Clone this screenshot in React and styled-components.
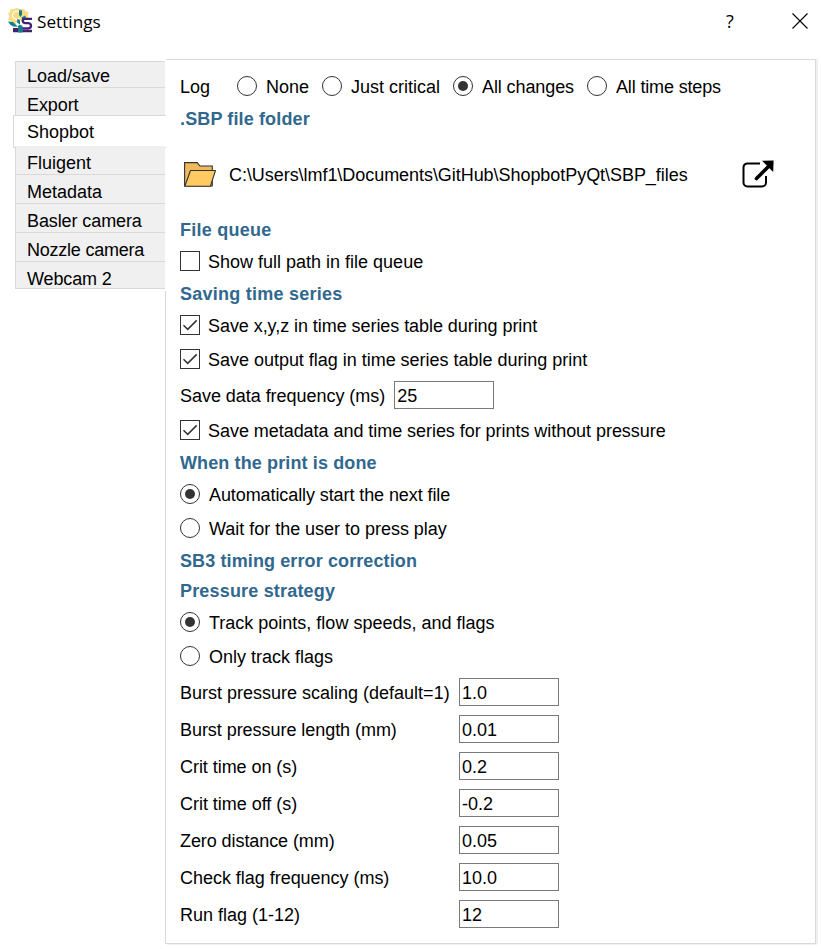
import React, { useState } from "react";
import styled, { createGlobalStyle, css } from "styled-components";

const GlobalStyle = createGlobalStyle`
  * { box-sizing: border-box; }
  body { margin: 0; background: #fff; }
`;

const Window = styled.div`
  width: 821px;
  height: 949px;
  display: flex;
  flex-direction: column;
  background: #fff;
  color: #000;
  font-family: "Liberation Sans", Arial, sans-serif;
  font-size: 18px;
  line-height: 22px;
  white-space: nowrap;
  overflow: hidden;
`;

const TitleBar = styled.header`
  height: 59px;
  flex: none;
  display: flex;
  align-items: flex-start;
  padding: 8px 13px 0 8px;
`;

const Title = styled.h1`
  margin: 2px 0 0 4px;
  flex: 1;
  font: 400 17.2px/24px "Open Sans", "Noto Sans", sans-serif;
`;

const TitleButton = styled.button`
  border: 0;
  padding: 0;
  background: none;
  color: #000;
  width: ${(p) => p.$width}px;
  height: 25px;
  display: flex;
  align-items: center;
  justify-content: center;
  font: 400 18px/24px "Open Sans", "Noto Sans", sans-serif;
`;

const CloseButton = styled(TitleButton)`
  margin-left: 52px;
`;

const Body = styled.div`
  display: flex;
  height: 885px;
`;

const TabColumn = styled.nav`
  width: 166px;
  flex: none;
  display: flex;
  flex-direction: column;
  padding-top: 2px;
`;

const Tab = styled.div`
  margin: 0 1px 0 15px;
  height: ${(p) => p.$height}px;
  padding: ${(p) => p.$top}px 0 0 11px;
  background: #f0f0f0;
  border-left: 1px solid #d9d9d9;
  border-top: 1px solid #d9d9d9;
  letter-spacing: ${(p) => p.$tracking || 0}px;
  ${(p) => p.$afterSelected && css`border-top-color: #f0f0f0;`}
  ${(p) => p.$last && css`border-bottom: 1px solid #d9d9d9;`}
  ${(p) =>
    p.$selected &&
    css`
      margin: 0 0 -2px 13px;
      padding-left: 13px;
      background: #fff;
      border-bottom: 1px solid #d9d9d9;
    `}
`;

const PanelEdge = styled.div`
  flex: 1;
  margin-top: 2px;
  border-right: 1px solid #d9d9d9;
`;

const Panel = styled.main`
  width: 650px;
  height: 885px;
  border: 1px solid #d9d9d9;
  border-left: 0;
  box-shadow: 1px 1px #f0f0f0, 2px 0 #f0f0f0;
  padding: 10px 0 0 14px;
`;

const Row = styled.div`
  height: ${(p) => p.$height}px;
  display: flex;
  align-items: center;
`;

const Heading = styled.h2`
  margin: 0;
  height: ${(p) => p.$height}px;
  padding-top: 1px;
  line-height: ${(p) => p.$height}px;
  font-size: 18px;
  font-weight: 700;
  color: #31688e;
  letter-spacing: ${(p) => p.$tracking || 0}px;
`;

const Text = styled.span`
  padding-top: 2px;
  letter-spacing: ${(p) => p.$tracking || 0}px;
`;

const Choice = styled.label`
  display: flex;
  align-items: center;
  gap: ${(p) => p.$gap || 9}px;
  width: ${(p) => (p.$width ? p.$width + "px" : "auto")};
`;

const LogLabel = styled.span`
  width: 57px;
  padding-top: 1px;
`;

const RadioMark = styled.span`
  width: 20px;
  height: 20px;
  flex: none;
  border: 1px solid #333;
  border-radius: 50%;
  display: flex;
  align-items: center;
  justify-content: center;
  &::after {
    content: "";
    width: 10px;
    height: 10px;
    border-radius: 50%;
    background: ${(p) => (p.$on ? "#333" : "transparent")};
  }
`;

const CheckMark = styled.span`
  width: 20px;
  height: 20px;
  flex: none;
  border: 1px solid #333;
  display: flex;
  svg { display: block; }
`;

const Field = styled.input`
  width: 100px;
  height: 28px;
  border: 1px solid #7a7a7a;
  border-radius: 0;
  padding: 2px 0 0 2px;
  background: #fff;
  color: #000;
  font: inherit;
  line-height: 24px;
  outline: 0;
`;

const FormRow = styled.div`
  display: grid;
  grid-template-columns: 279px 100px;
  height: 37px;
  padding-top: 5px;
  line-height: 30px;
`;

const FieldLabel = styled.span`
  letter-spacing: ${(p) => p.$tracking || 0}px;
`;

const FolderRow = styled(Row)`
  padding-left: 4px;
`;

const FolderPath = styled(Text)`
  margin-left: 13px;
  width: 513px;
`;

function AppLogo() {
  return (
    <svg width="25" height="25" viewBox="0 0 25 25">
      <path d="M2 1.500L6 1l3-1 3 1 4 0 1.500 2 3 1-.5 4 .5 3-4 1-4 .5L9 14l-2 3-3-2-1-2-3-1 1.500-4L0 5l2-1z" fill="#f8dc83" />
      <path d="M11 4a4 4 0 1 0 .5 6" fill="none" stroke="#fff" strokeWidth="1.100" />
      <path d="M11 2l3 .5v4l-1.500 2.500-1.500-2z" fill="#12808c" />
      <path d="M0 13.500l5 .5 5 4.800-5-.3-3-2zM9.500 10.500l2.500 2v4l-3-2zM13.500 9.500l3.500-2 1 2-3.500 2.500z" fill="#12808c" />
      <path d="M24 10.800H17q-2.300 0-2.300 2t2.300 2.300h3.500q2.500.3 2.500 2.700t-2.500 2.500H13.500M5 23h19" fill="none" stroke="#432371" strokeWidth="2.300" />
      <path d="M5 20h6v4H5z" fill="#432371" />
      <path d="M10 18l2-1.500 2.500 1.500v6.500H10z" fill="#12808c" />
    </svg>
  );
}

function CloseIcon() {
  return (
    <svg width="16" height="16" viewBox="0 0 16 16">
      <path d="M.5.5l15 15M15.5.5l-15 15" stroke="#000" strokeWidth="1.1" />
    </svg>
  );
}

function FolderIcon() {
  return (
    <svg width="32" height="25" viewBox="0 0 32 25">
      <path d="M.6 24V.6h12.600L16 4h12.300v20z" fill="#f0b95c" stroke="#333" strokeWidth="1.1" />
      <path d="M.8 24.200L6.500 8.500h25L26.400 24.200z" fill="#ffca61" stroke="#333" strokeWidth="1.1" strokeLinejoin="round" />
    </svg>
  );
}

function OpenIcon() {
  return (
    <svg width="32" height="28" viewBox="0 0 32 28">
      <path d="M18 3.400H5.500a4 4 0 0 0-4 4v15a4 4 0 0 0 4 4h14.500a4 4 0 0 0 4-4V16" fill="none" stroke="#000" strokeWidth="2" />
      <path d="M14.500 18.500L27 6" fill="none" stroke="#000" strokeWidth="3.600" strokeLinecap="round" />
      <path d="M20 .8L31.600.4 31.200 12z" fill="#000" />
    </svg>
  );
}

const tabs = [
  { name: "Load/save", height: 26, top: 3 },
  { name: "Export", height: 28, top: 6, tracking: -0.1 },
  { name: "Shopbot", height: 33, top: 5 },
  { name: "Fluigent", height: 28, top: 5 },
  { name: "Metadata", height: 29, top: 6 },
  { name: "Basler camera", height: 29, top: 6, tracking: -0.1 },
  { name: "Nozzle camera", height: 29, top: 6, tracking: -0.23 },
  { name: "Webcam 2", height: 28, top: 6, tracking: -0.12 },
];

const logOptions = [
  { label: "None", width: 85 },
  { label: "Just critical", width: 131 },
  { label: "All changes", width: 134, tracking: -0.1 },
  { label: "All time steps", tracking: -0.15 },
];

const doneOptions = [
  { label: "Automatically start the next file", tracking: -0.09 },
  { label: "Wait for the user to press play", tracking: -0.02 },
];

const strategyOptions = [
  { label: "Track points, flow speeds, and flags" },
  { label: "Only track flags" },
];

const fields = [
  { label: "Burst pressure scaling (default=1)", value: "1.0" },
  { label: "Burst pressure length (mm)", value: "0.01", tracking: -0.05 },
  { label: "Crit time on (s)", value: "0.2", tracking: -0.05 },
  { label: "Crit time off (s)", value: "-0.2", tracking: -0.03 },
  { label: "Zero distance (mm)", value: "0.05", tracking: -0.08 },
  { label: "Check flag frequency (ms)", value: "10.0", tracking: -0.03 },
  { label: "Run flag (1-12)", value: "12" },
];

function Radio({ on, label, width, tracking, onPick }) {
  return (
    <Choice $width={width} onClick={onPick}>
      <RadioMark $on={on} />
      <Text $tracking={tracking}>{label}</Text>
    </Choice>
  );
}

function Check({ label, initial, height, tracking }) {
  const [on, setOn] = useState(initial);
  return (
    <Row $height={height}>
      <Choice $gap={8} onClick={() => setOn(!on)}>
        <CheckMark>
          {on && (
            <svg width="18" height="18" viewBox="0 0 18 18">
              <path d="M2.5 9.2l4.2 4.2 9-9" fill="none" stroke="#333" strokeWidth="1.5" />
            </svg>
          )}
        </CheckMark>
        <Text $tracking={tracking}>{label}</Text>
      </Choice>
    </Row>
  );
}

function RadioRows({ options }) {
  const [picked, setPicked] = useState(0);
  return options.map((o, i) => (
    <Row $height={34} key={o.label}>
      <Radio {...o} on={picked === i} onPick={() => setPicked(i)} />
    </Row>
  ));
}

export default function App() {
  const [selected, setSelected] = useState(2);
  const [log, setLog] = useState(2);
  return (
    <Window>
      <GlobalStyle />
      <TitleBar>
        <AppLogo />
        <Title>Settings</Title>
        <TitleButton $width={20}>?</TitleButton>
        <CloseButton $width={16}>
          <CloseIcon />
        </CloseButton>
      </TitleBar>
      <Body>
        <TabColumn>
          {tabs.map((t, i) => (
            <Tab
              key={t.name}
              $height={t.height}
              $top={t.top}
              $tracking={t.tracking}
              $selected={i === selected}
              $afterSelected={i === selected + 1}
              $last={i === tabs.length - 1}
              onClick={() => setSelected(i)}
            >
              {t.name}
            </Tab>
          ))}
          <PanelEdge />
        </TabColumn>
        <Panel>
          <Row $height={32}>
            <LogLabel>Log</LogLabel>
            {logOptions.map((o, i) => (
              <Radio key={o.label} {...o} on={log === i} onPick={() => setLog(i)} />
            ))}
          </Row>
          <Heading $height={32} $tracking={0.13}>.SBP file folder</Heading>
          <FolderRow $height={80}>
            <FolderIcon />
            <FolderPath $tracking={-0.05}>C:\Users\lmf1\Documents\GitHub\ShopbotPyQt\SBP_files</FolderPath>
            <OpenIcon />
          </FolderRow>
          <Heading $height={31} $tracking={0.25}>File queue</Heading>
          <Check height={32} label="Show full path in file queue" initial={false} />
          <Heading $height={32} $tracking={0.25}>Saving time series</Heading>
          <Check height={32} label="Save x,y,z in time series table during print" tracking={-0.06} initial />
          <Check height={36} label="Save output flag in time series table during print" tracking={-0.02} initial />
          <Row $height={36}>
            <Choice>
              <Text $tracking={-0.04}>Save data frequency (ms)</Text>
              <Field defaultValue="25" />
            </Choice>
          </Row>
          <Check height={34} label="Save metadata and time series for prints without pressure" tracking={-0.045} initial />
          <Heading $height={30} $tracking={0.12}>When the print is done</Heading>
          <RadioRows options={doneOptions} />
          <Heading $height={30} $tracking={0.11}>SB3 timing error correction</Heading>
          <Heading $height={30} $tracking={0.18}>Pressure strategy</Heading>
          <RadioRows options={strategyOptions} />
          {fields.map((f) => (
            <FormRow key={f.label}>
              <FieldLabel $tracking={f.tracking}>{f.label}</FieldLabel>
              <Field defaultValue={f.value} />
            </FormRow>
          ))}
        </Panel>
      </Body>
    </Window>
  );
}
